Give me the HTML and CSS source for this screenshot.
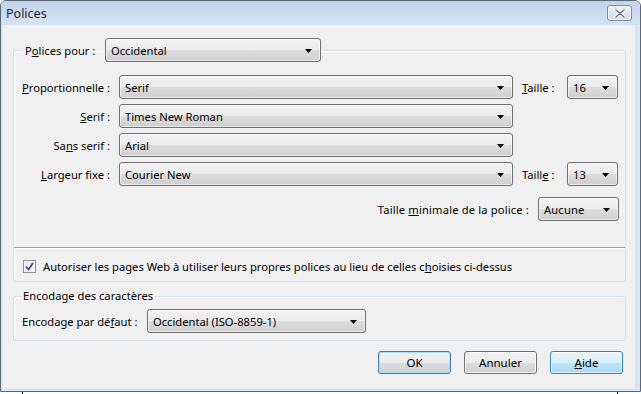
FILE: index.html
```html
<!DOCTYPE html>
<html lang="fr">
<head>
    <meta charset="utf-8" />
    <title>Polices</title>
    <link rel="stylesheet" href="styles.css">
</head>
<body>
    <div class="window">
        <div class="titlebar">
            <span class="title">Polices</span>
            <span class="close-btn">
                <svg width="12" height="9" viewBox="0 0 12 9">
                    <path d="M2 1 L10 8 M10 1 L2 8" stroke="#fff" stroke-width="3.4" stroke-linecap="round" />
                    <path d="M2 1 L10 8 M10 1 L2 8" stroke="#6a7689" stroke-width="1.6" stroke-linecap="round" />
                </svg>
            </span>
        </div>
        <div class="content">
            <fieldset class="group fonts-group">
                <legend class="legend-combo">
                    <span class="legend-label">P<u>o</u>lices pour :</span>
                    <div class="combo lang-combo">Occidental</div>
                </legend>

                <div class="font-grid">
                    <span class="row-label"><u>P</u>roportionnelle :</span>
                    <div class="combo">Serif</div>
                    <span class="size-label"><u>T</u>aille :</span>
                    <div class="combo">16</div>

                    <span class="row-label"><u>S</u>erif :</span>
                    <div class="combo">Times New Roman</div>
                    <span></span>
                    <span></span>

                    <span class="row-label">Sa<u>n</u>s serif :</span>
                    <div class="combo">Arial</div>
                    <span></span>
                    <span></span>

                    <span class="row-label"><u>L</u>argeur fixe :</span>
                    <div class="combo">Courier New</div>
                    <span class="size-label">Taill<u>e</u> :</span>
                    <div class="combo">13</div>
                </div>

                <div class="min-row">
                    <span>Taille <u>m</u>inimale de la police :</span>
                    <div class="combo min-combo">Aucune</div>
                </div>

                <div class="separator"></div>

                <div class="check-row">
                    <span class="checkbox">
                        <svg width="9" height="9" viewBox="0 0 9 9">
                            <path d="M1 4.5 L3.5 7.5 L8 1" fill="none" stroke="#3b4f8a" stroke-width="1.8" />
                        </svg>
                    </span>
                    <span>Autoriser les pages Web à utiliser leurs propres polices au lieu de celles c<u>h</u>oisies ci-dessus</span>
                </div>
            </fieldset>

            <fieldset class="group encoding-group">
                <legend>Encodage des caractères</legend>
                <div class="enc-row">
                    <span class="enc-label">Encodage par dé<u>f</u>aut :</span>
                    <div class="combo enc-combo">Occidental (ISO-8859-1)</div>
                </div>
            </fieldset>

            <div class="buttons">
                <button class="btn btn-default">OK</button>
                <button class="btn">Annuler</button>
                <button class="btn btn-hot"><u>A</u>ide</button>
            </div>
        </div>
    </div>
    <div class="behind"></div>
</body>
</html>
```

FILE: styles.css
```css
* {
    margin: 0;
    padding: 0;
    box-sizing: border-box;
}

body {
    font-family: "Noto Sans", "Open Sans", sans-serif;
    font-size: 11.2px;
    color: #000;
    background: #fff;
    width: 641px;
}

.window {
    width: 641px;
    height: 392px;
    border: 1px solid #5d6877;
    border-radius: 6px 6px 0 0;
    background: #dbe6f3;
    display: flex;
    flex-direction: column;
}

.titlebar {
    height: 24px;
    display: flex;
    justify-content: space-between;
    align-items: flex-start;
    padding: 4px 8px 0 5px;
    background: linear-gradient(#c3d4ea, #d6e2f1);
    border-radius: 5px 5px 0 0;
}

.title {
    font-size: 12.5px;
    line-height: 18px;
    color: #1d2630;
}

.close-btn {
    width: 25px;
    height: 16px;
    border: 1px solid #7c8ba3;
    border-radius: 3px;
    background: linear-gradient(#e9eff7, #d3deeb);
    box-shadow: inset 0 0 0 1px rgba(255, 255, 255, 0.6);
    display: flex;
    align-items: center;
    justify-content: center;
}

.content {
    flex: 1;
    margin: 0 5px 3px 2px;
    background: #f0f0f0;
    padding: 0 9px 0 10px;
}

.group {
    border: 1px solid #d5dfe5;
    border-radius: 3px;
    box-shadow: inset 1px 1px 0 #fff;
    min-width: 0;
}

.fonts-group {
    margin-top: 13px;
    padding: 13px 6px 7px 8px;
}

.legend-combo {
    display: flex;
    align-items: center;
    padding: 0 3px;
}

.legend-label {
    width: 80px;
}

.combo {
    height: 24px;
    border: 1px solid #707070;
    border-radius: 3px;
    background: linear-gradient(#f2f2f2, #ebebeb 50%, #dddddd 50%, #cfcfcf);
    box-shadow: inset 0 0 0 1px rgba(255, 255, 255, 0.55);
    padding: 0 20px 0 5px;
    display: flex;
    align-items: center;
    position: relative;
    white-space: nowrap;
}

.combo::after {
    content: "";
    position: absolute;
    right: 8px;
    top: 10px;
    width: 7px;
    height: 4px;
    background: #000;
    clip-path: polygon(0 0, 100% 0, 50% 100%);
}

.lang-combo {
    width: 216px;
}

.font-grid {
    display: grid;
    grid-template-columns: 88px 394px 36px 51px;
    column-gap: 9px;
    row-gap: 5px;
    align-items: center;
}

.row-label {
    text-align: right;
    white-space: nowrap;
}

.min-row {
    margin-top: 11px;
    display: flex;
    justify-content: flex-end;
    align-items: center;
    gap: 9px;
    letter-spacing: 0.15px;
}

.min-combo {
    width: 81px;
}

.separator {
    margin: 26px -6px 0 -8px;
    border-top: 1px solid #a0a0a0;
    border-bottom: 1px solid #fff;
}

.check-row {
    margin-top: 9px;
    height: 16px;
    display: flex;
    align-items: center;
    gap: 7px;
    padding-left: 1px;
}

.checkbox {
    width: 13px;
    height: 13px;
    border: 1px solid #8e8f8f;
    background: linear-gradient(135deg, #dfe3ea, #fbfbfb);
    box-shadow: inset 0 0 0 1px #f4f4f4;
    display: flex;
    align-items: center;
    justify-content: center;
}

.encoding-group {
    margin-top: 6px;
    padding: 5px 6px 7px 8px;
}

.encoding-group legend {
    padding: 0 1px;
    line-height: 16px;
}

.enc-row {
    display: flex;
    align-items: center;
}

.enc-label {
    width: 125px;
}

.enc-combo {
    width: 219px;
}

.buttons {
    margin-top: 10px;
    display: flex;
    justify-content: flex-end;
    gap: 13px;
    padding-right: 3px;
}

.btn {
    width: 73px;
    height: 23px;
    font-family: inherit;
    font-size: 11.5px;
    color: #000;
    border: 1px solid #707070;
    border-radius: 3px;
    background: linear-gradient(#f2f2f2, #ebebeb 50%, #dddddd 50%, #cfcfcf);
    box-shadow: inset 0 0 0 1px #fcfcfc;
}

.btn-default {
    border-color: #3c7fb1;
    box-shadow: inset 0 0 0 1px #a9dcf6;
}

.btn-hot {
    border-color: #3c7fb1;
    background: linear-gradient(#eaf6fd, #d9f0fc 50%, #bee6fd 50%, #a7d9f5);
    box-shadow: inset 0 0 0 1px rgba(255, 255, 255, 0.7);
}

.behind {
    height: 2px;
    margin-left: 22px;
    width: 596px;
    border-left: 1px solid #000;
    border-right: 1px solid #000;
}
```
